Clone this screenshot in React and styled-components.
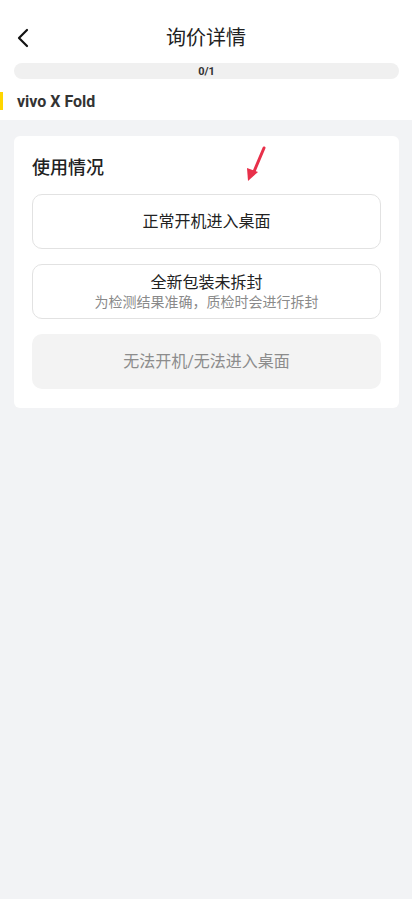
import styled, { createGlobalStyle } from 'styled-components'

const GlobalStyle = createGlobalStyle`
   html, body {
      margin: 0;
      padding: 0;
      background: #f2f3f5;
      font-family: Roboto, "Noto Sans CJK SC", sans-serif;
   }
`

const Page = styled.div`
   min-height: 899px;
   background: #f2f3f5;
`

// 상단 흰색 영역 (헤더 + 진행바 + 기종명)
const Top = styled.div`
   background: #fff;
   padding-bottom: 10px;
`

const NavBar = styled.div`
   position: relative;
   height: 60px;
   display: flex;
   align-items: center;
   justify-content: center;
   padding-top: 16px;
   box-sizing: border-box;
`

const BackButton = styled.button`
   position: absolute;
   left: 12px;
   top: 26px;
   width: 22px;
   height: 24px;
   padding: 0;
   border: none;
   background: none;
   display: flex;
   align-items: center;
   justify-content: center;
`

const Title = styled.h1`
   margin: 0;
   font-size: 20px;
   font-weight: 400;
   color: #222;
   line-height: 24px;
`

const Progress = styled.div`
   margin: 3px 13px 0 14px;
   height: 16px;
   border-radius: 8px;
   background: #f0f0f0;
   display: flex;
   align-items: center;
   justify-content: center;
   font-size: 11px;
   font-weight: 700;
   color: #333;
`

const ModelRow = styled.div`
   position: relative;
   display: flex;
   align-items: center;
   height: 18px;
   margin-top: 13px;
   padding-left: 17px;
   font-size: 16px;
   font-weight: 700;
   color: #333;

   &::before {
      content: '';
      position: absolute;
      left: 0;
      top: 0;
      width: 3px;
      height: 18px;
      background: #ffd600;
   }
`

const Card = styled.div`
   position: relative;
   margin: 16px 13px 0 14px;
   background: #fff;
   border-radius: 6px;
   padding: 20px 18px 19px 18px;
`

const CardTitle = styled.div`
   font-size: 18px;
   font-weight: 500;
   color: #222;
   line-height: 24px;
   margin-bottom: 14px;
`

const Options = styled.div`
   display: flex;
   flex-direction: column;
   gap: 15px;
`

const Option = styled.button`
   height: 55px;
   box-sizing: border-box;
   border-radius: 10px;
   border: ${(props) => (props.disabled ? 'none' : '1px solid #e2e2e2')};
   background: ${(props) => (props.disabled ? '#f3f3f3' : '#fff')};
   color: ${(props) => (props.disabled ? '#8c8c8c' : '#222')};
   font-family: inherit;
   font-size: 16px;
   display: flex;
   flex-direction: column;
   align-items: center;
   justify-content: center;
   padding: 0;
`

const OptionSub = styled.span`
   font-size: 14px;
   color: #8a8a8a;
   line-height: 18px;
`

const OptionMain = styled.span`
   line-height: 20px;
`

const Pointer = styled.svg`
   position: absolute;
   left: 217px;
   top: 10px;
`

function App() {
   return (
      <>
         <GlobalStyle />
         <Page>
            <Top>
               <NavBar>
                  <BackButton>
                     <svg width="14" height="20" viewBox="0 0 14 20">
                        <path d="M11 2 L3 10 L11 18" fill="none" stroke="#111" strokeWidth="2.2" strokeLinecap="round" strokeLinejoin="round" />
                     </svg>
                  </BackButton>
                  <Title>询价详情</Title>
               </NavBar>
               <Progress>0/1</Progress>
               <ModelRow>vivo X Fold</ModelRow>
            </Top>
            <Card>
               <Pointer width="40" height="40" viewBox="0 0 40 40">
                  <path d="M33 2 L22 28" stroke="#e8304a" strokeWidth="3" strokeLinecap="round" />
                  <path d="M17 35 L16 22 L27 26 Z" fill="#e8304a" />
               </Pointer>
               <CardTitle>使用情况</CardTitle>
               <Options>
                  <Option>
                     <OptionMain>正常开机进入桌面</OptionMain>
                  </Option>
                  <Option>
                     <OptionMain>全新包装未拆封</OptionMain>
                     <OptionSub>为检测结果准确，质检时会进行拆封</OptionSub>
                  </Option>
                  <Option disabled>
                     <OptionMain>无法开机/无法进入桌面</OptionMain>
                  </Option>
               </Options>
            </Card>
         </Page>
      </>
   )
}

export default App
